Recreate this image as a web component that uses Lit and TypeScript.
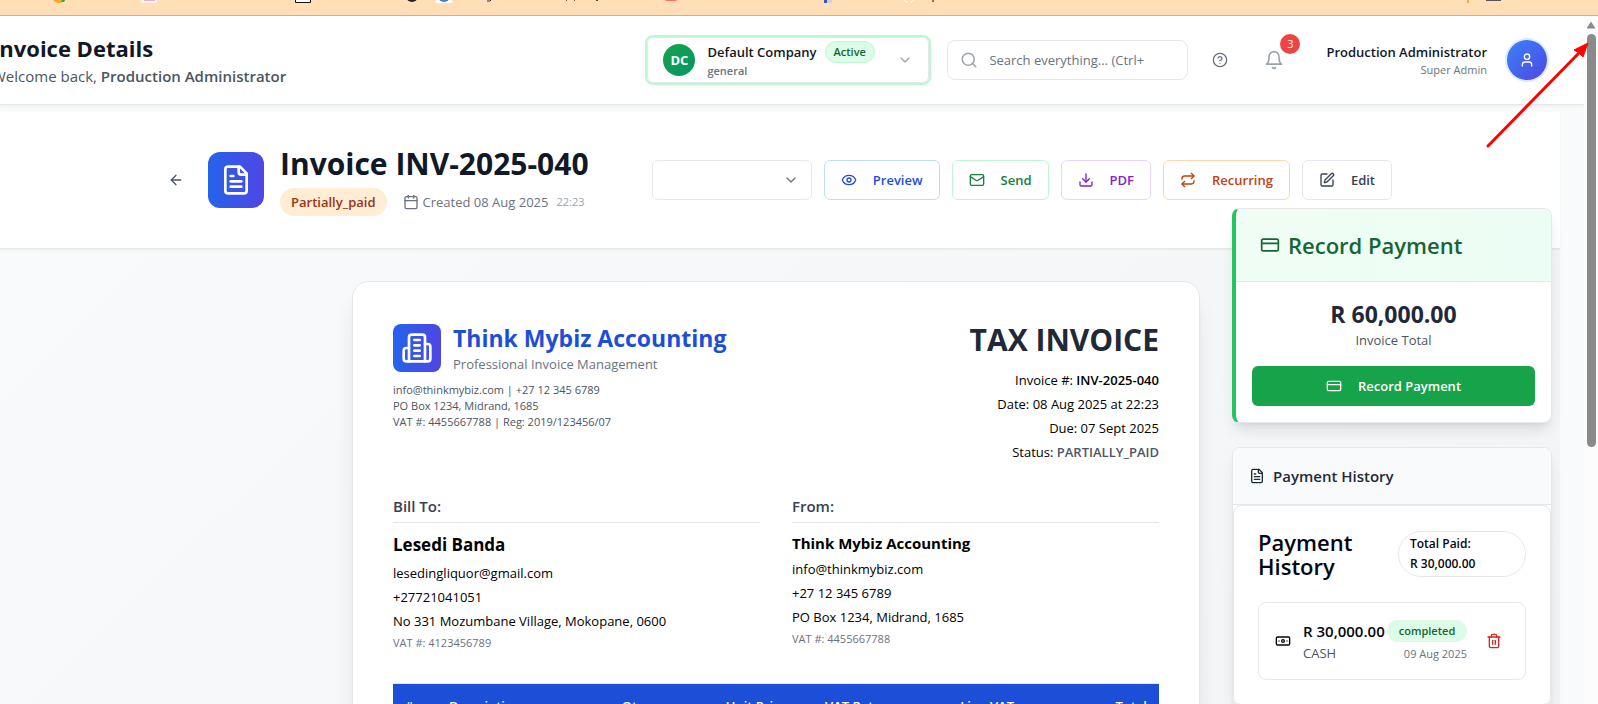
import { LitElement, html, css, svg } from "lit";
import { customElement } from "lit/decorators.js";

const icons: Record<string, unknown> = {
  back: svg`<path d="m12 19-7-7 7-7"/><path d="M19 12H5"/>`,
  file: svg`<path d="M15 2H6a2 2 0 0 0-2 2v16a2 2 0 0 0 2 2h12a2 2 0 0 0 2-2V7Z"/><path d="M14 2v4a2 2 0 0 0 2 2h4"/><path d="M10 9H8"/><path d="M16 13H8"/><path d="M16 17H8"/>`,
  calendar: svg`<path d="M8 2v4"/><path d="M16 2v4"/><rect width="18" height="18" x="3" y="4" rx="2"/><path d="M3 10h18"/>`,
  chevron: svg`<path d="m6 9 6 6 6-6"/>`,
  eye: svg`<path d="M2.062 12.348a1 1 0 0 1 0-.696 10.75 10.75 0 0 1 19.876 0 1 1 0 0 1 0 .696 10.75 10.75 0 0 1-19.876 0"/><circle cx="12" cy="12" r="3"/>`,
  mail: svg`<rect width="20" height="16" x="2" y="4" rx="2"/><path d="m22 7-8.97 5.7a1.94 1.94 0 0 1-2.06 0L2 7"/>`,
  download: svg`<path d="M21 15v4a2 2 0 0 1-2 2H5a2 2 0 0 1-2-2v-4"/><path d="m7 10 5 5 5-5"/><path d="M12 15V3"/>`,
  repeat: svg`<path d="m17 2 4 4-4 4"/><path d="M3 11v-1a4 4 0 0 1 4-4h14"/><path d="m7 22-4-4 4-4"/><path d="M21 13v1a4 4 0 0 1-4 4H3"/>`,
  edit: svg`<path d="M12 3H5a2 2 0 0 0-2 2v14a2 2 0 0 0 2 2h14a2 2 0 0 0 2-2v-7"/><path d="M18.375 2.625a1 1 0 0 1 3 3l-9.013 9.014a2 2 0 0 1-.853.505l-2.873.84a.5.5 0 0 1-.62-.62l.84-2.873a2 2 0 0 1 .506-.852z"/>`,
  card: svg`<rect width="20" height="14" x="2" y="5" rx="2"/><path d="M2 10h20"/>`,
  building: svg`<path d="M6 22V4a2 2 0 0 1 2-2h8a2 2 0 0 1 2 2v18Z"/><path d="M6 12H4a2 2 0 0 0-2 2v6a2 2 0 0 0 2 2h2"/><path d="M18 9h2a2 2 0 0 1 2 2v9a2 2 0 0 1-2 2h-2"/><path d="M10 6h4"/><path d="M10 10h4"/><path d="M10 14h4"/><path d="M10 18h4"/>`,
  search: svg`<circle cx="11" cy="11" r="8"/><path d="m21 21-4.3-4.3"/>`,
  help: svg`<circle cx="12" cy="12" r="10"/><path d="M9.09 9a3 3 0 0 1 5.83 1c0 2-3 3-3 3"/><path d="M12 17h.01"/>`,
  bell: svg`<path d="M6 8a6 6 0 0 1 12 0c0 7 3 9 3 9H3s3-2 3-9"/><path d="M10.3 21a1.94 1.94 0 0 0 3.4 0"/>`,
  user: svg`<path d="M19 21v-2a4 4 0 0 0-4-4H9a4 4 0 0 0-4 4v2"/><circle cx="12" cy="7" r="4"/>`,
  cash: svg`<rect width="20" height="12" x="2" y="6" rx="2"/><circle cx="12" cy="12" r="2"/><path d="M6 12h.01M18 12h.01"/>`,
  trash: svg`<path d="M3 6h18"/><path d="M19 6v14c0 1-1 2-2 2H7c-1 0-2-1-2-2V6"/><path d="M8 6V4c0-1 1-2 2-2h4c1 0 2 1 2 2v2"/><path d="M10 11v6"/><path d="M14 11v6"/>`,
};

const icon = (name: string, size = 16) => html`<svg class="icon" width=${size} height=${size}
  viewBox="0 0 24 24" fill="none" stroke="currentColor" stroke-width="2"
  stroke-linecap="round" stroke-linejoin="round" aria-hidden="true">${icons[name]}</svg>`;

const actions = [
  { label: "Preview", icon: "eye", tone: "blue" },
  { label: "Send", icon: "mail", tone: "green" },
  { label: "PDF", icon: "download", tone: "purple" },
  { label: "Recurring", icon: "repeat", tone: "orange" },
  { label: "Edit", icon: "edit", tone: "gray" },
];

const base = css`
  * { box-sizing: border-box; margin: 0; }
  button, input, select { font: inherit; color: inherit; }
  button { cursor: pointer; }
  .icon { display: block; flex: none; }
`;

@customElement("app-header")
class AppHeader extends LitElement {
  static styles = [base, css`
    :host { display: block; background: #fff; border-bottom: 1px solid #e5e7eb; box-shadow: 0 1px 3px #0000000f; position: relative; }
    .row { display: flex; align-items: center; gap: 12px; height: 88px; padding-right: 37px; }
    .heading { flex: 1; margin-left: -8px; white-space: nowrap; }
    h1 { font-size: 22px; line-height: 32px; font-weight: 700; color: #111827; }
    .welcome { font-size: 15px; line-height: 24px; color: #4b5563; }
    .welcome strong { font-weight: 600; }
    .company { display: flex; align-items: center; gap: 12px; width: 286px; height: 50px; padding: 0 16px; margin-right: 4px; text-align: left;
      background: #fff; border: 2px solid #bbf7d0; border-radius: 8px; box-shadow: inset 0 0 0 1px #e5e7eb; }
    .initials { display: grid; place-items: center; width: 32px; height: 32px; border-radius: 50%; color: #fff;
      font-size: 13px; font-weight: 700; background: linear-gradient(135deg, #16a34a, #059669); }
    .info { flex: 1; }
    .name { display: flex; align-items: center; gap: 8px; font-size: 13px; font-weight: 600; line-height: 20px; color: #111827; white-space: nowrap; }
    .active { font-size: 11px; line-height: 20px; padding: 0 8px; border: 1px solid #bbf7d0; border-radius: 11px; background: #dcfce7; color: #166534; }
    .kind { display: block; font-size: 11px; line-height: 16px; font-weight: 600; color: #6b7280; }
    .company .icon { color: #9ca3af; }
    .search { display: flex; align-items: center; gap: 11px; width: 241px; height: 40px; padding: 0 12px; border: 1px solid #e5e7eb; border-radius: 8px; color: #9ca3af; }
    .search input { flex: 1; min-width: 0; border: 0; padding: 0; outline: 0; background: none; font-size: 13px; color: #374151; }
    .search input::placeholder { color: #6b7280; opacity: 1; }
    .tools { display: flex; gap: 14px; }
    .tool { position: relative; display: grid; place-items: center; width: 40px; height: 40px; padding: 0; border: 0; background: none; color: #6b7280; }
    .bell { color: #9ca3af; }
    .badge { position: absolute; top: -6px; right: -6px; width: 20px; height: 20px; border-radius: 50%; background: #ef4444; color: #fff; font-size: 11px; line-height: 20px; }
    .user { display: flex; align-items: center; gap: 20px; text-align: right; padding-left: 20px; white-space: nowrap; }
    .user-name { font-size: 13px; line-height: 20px; font-weight: 600; color: #111827; }
    .role { font-size: 11px; line-height: 16px; font-weight: 500; color: #6b7280; }
    .avatar { display: grid; place-items: center; width: 40px; height: 40px; padding: 0; border: 0; border-radius: 50%; color: #fff;
      background: linear-gradient(135deg, #3b82f6, #4f46e5); box-shadow: 0 0 0 2px #dbeafe; }
  `];
  render() {
    return html`<header class="row">
      <div class="heading">
        <h1>Invoice Details</h1>
        <p class="welcome">Welcome back, <strong>Production Administrator</strong></p>
      </div>
      <button class="company">
        <span class="initials">DC</span>
        <span class="info">
          <span class="name">Default Company <span class="active">Active</span></span>
          <span class="kind">general</span>
        </span>
        ${icon("chevron")}
      </button>
      <label class="search">${icon("search", 18)}<input type="search" aria-label="Search" placeholder="Search everything... (Ctrl+" /></label>
      <div class="tools">
        <button class="tool" aria-label="Help">${icon("help")}</button>
        <button class="tool bell" aria-label="Notifications">${icon("bell", 20)}<span class="badge">3</span></button>
      </div>
      <div class="user">
        <div><p class="user-name">Production Administrator</p><p class="role">Super Admin</p></div>
        <button class="avatar" aria-label="Account">${icon("user")}</button>
      </div>
    </header>`;
  }
}

@customElement("invoice-toolbar")
class InvoiceToolbar extends LitElement {
  static styles = [base, css`
    :host { display: block; background: #fffffff2; border-bottom: 1px solid #e5e7eb; box-shadow: 0 1px 2px #0000000d; }
    .inner { display: flex; align-items: center; gap: 16px; max-width: 1280px; margin: 0 auto; padding: 32px 24px; }
    .back { display: grid; place-items: center; width: 32px; height: 36px; padding: 0; border: 0; background: none; color: #4b5563; }
    .tile { display: grid; place-items: center; flex: none; width: 56px; height: 56px; border-radius: 12px; color: #fff; background: linear-gradient(90deg, #2563eb, #4f46e5); }
    .title { display: grid; gap: 4px; white-space: nowrap; }
    h2 { font-size: 30px; line-height: 40px; font-weight: 700; color: #111827; }
    .meta { display: flex; align-items: center; gap: 16px; font-size: 13px; line-height: 20px; color: #6b7280; }
    .status { padding: 4px 11px; border-radius: 14px; background: #ffedd5; color: #9a3412; font-weight: 600; }
    .created { display: flex; align-items: center; gap: 4px; }
    .time { font-size: 11px; color: #9ca3af; padding-left: 4px; }
    .actions { display: flex; gap: 12px; margin-left: auto; }
    .picker { position: relative; width: 160px; color: #6b7280; }
    select { width: 100%; height: 40px; appearance: none; border: 1px solid #e5e7eb; border-radius: 6px; background: #fff; padding: 0 36px 0 12px; font-size: 13px; }
    .picker .icon { position: absolute; right: 13px; top: 12px; pointer-events: none; }
    .action { display: flex; align-items: center; gap: 16px; height: 40px; padding: 0 16px; border: 1px solid; border-radius: 6px; background: #fff; font-size: 13px; font-weight: 600; }
    .blue { color: #1d4ed8; border-color: #bfdbfe; }
    .green { color: #15803d; border-color: #bbf7d0; }
    .purple { color: #7e22ce; border-color: #e9d5ff; }
    .orange { color: #c2410c; border-color: #fed7aa; }
    .gray { color: #374151; border-color: #e5e7eb; }
  `];
  render() {
    return html`<section class="inner">
      <button class="back" aria-label="Back">${icon("back")}</button>
      <span class="tile">${icon("file", 32)}</span>
      <div class="title">
        <h2>Invoice INV-2025-040</h2>
        <div class="meta">
          <span class="status">Partially_paid</span>
          <span class="created">${icon("calendar")}Created 08 Aug 2025<span class="time">22:23</span></span>
        </div>
      </div>
      <div class="actions">
        <div class="picker"><select aria-label="Invoice status"><option></option></select>${icon("chevron")}</div>
        ${actions.map((a) => html`<button class="action ${a.tone}">${icon(a.icon)}${a.label}</button>`)}
      </div>
    </section>`;
  }
}

@customElement("invoice-sheet")
class InvoiceSheet extends LitElement {
  static styles = [base, css`
    :host { display: block; padding: 32px 0; }
    .sheet { max-width: 848px; margin: 0 auto; padding: 40px; background: #fff; border: 1px solid #e5e7eb; border-radius: 16px;
      box-shadow: 0 20px 25px -5px #0000001a, 0 8px 10px -6px #0000001a; font-size: 13px; line-height: 20px; color: #000; }
    .top { display: flex; justify-content: space-between; }
    .brand { display: flex; align-items: center; gap: 12px; }
    .logo { display: grid; place-items: center; width: 48px; height: 48px; border-radius: 8px; color: #fff; background: linear-gradient(90deg, #2563eb, #4f46e5); }
    .brand-name { font-size: 23px; line-height: 32px; font-weight: 700; color: #1d4ed8; }
    .tagline { color: #6b7280; }
    .contact { margin-top: 8px; font-size: 11px; line-height: 16px; color: #4b5563; }
    .lines { display: grid; gap: 4px; }
    .summary { text-align: right; align-content: start; }
    .summary h2 { font-size: 30px; line-height: 36px; font-weight: 700; color: #1f2937; margin-bottom: 8px; }
    .summary strong { font-weight: 600; }
    .state { font-weight: 600; color: #4b5563; }
    .parties { display: grid; grid-template-columns: 1fr 1fr; gap: 32px; margin: 32px 0; }
    h3 { font-size: 15px; line-height: 24px; font-weight: 600; color: #374151; padding-bottom: 4px; border-bottom: 1px solid #e5e7eb; margin-bottom: 4px; }
    .party { align-content: start; }
    .client { font-size: 17px; line-height: 28px; font-weight: 700; }
    .vendor { font-size: 15px; line-height: 24px; font-weight: 700; }
    .vat { font-size: 11px; line-height: 16px; color: #6b7280; }
    table { width: 100%; border-collapse: collapse; table-layout: fixed; border-top: 1px solid #e5e7eb; }
    th { padding: 12px; background: #1d4ed8; color: #fff; font-weight: 600; text-align: right; white-space: nowrap; }
    .left { text-align: left; }
    .num { width: 44px; }
    .qty { width: 72px; }
    .price { width: 143px; }
    .rate { width: 94px; }
    .amount { width: 133px; }
  `];
  render() {
    return html`<article class="sheet">
      <div class="top">
        <div>
          <div class="brand">
            <span class="logo">${icon("building", 32)}</span>
            <div><p class="brand-name">Think Mybiz Accounting</p><p class="tagline">Professional Invoice Management</p></div>
          </div>
          <div class="contact">
            <p>info@thinkmybiz.com | +27 12 345 6789</p>
            <p>PO Box 1234, Midrand, 1685</p>
            <p>VAT #: 4455667788 | Reg: 2019/123456/07</p>
          </div>
        </div>
        <div class="summary lines">
          <h2>TAX INVOICE</h2>
          <p>Invoice #: <strong>INV-2025-040</strong></p>
          <p>Date: 08 Aug 2025 at 22:23</p>
          <p>Due: 07 Sept 2025</p>
          <p>Status: <span class="state">PARTIALLY_PAID</span></p>
        </div>
      </div>
      <div class="parties">
        <div class="party lines">
          <h3>Bill To:</h3>
          <p class="client">Lesedi Banda</p>
          <p>lesedingliquor@gmail.com</p>
          <p>+27721041051</p>
          <p>No 331 Mozumbane Village, Mokopane, 0600</p>
          <p class="vat">VAT #: 4123456789</p>
        </div>
        <div class="party lines">
          <h3>From:</h3>
          <p class="vendor">Think Mybiz Accounting</p>
          <p>info@thinkmybiz.com</p>
          <p>+27 12 345 6789</p>
          <p>PO Box 1234, Midrand, 1685</p>
          <p class="vat">VAT #: 4455667788</p>
        </div>
      </div>
      <table>
        <thead><tr>
          <th class="left num">#</th><th class="left">Description</th><th class="qty">Qty</th><th class="price">Unit Price</th>
          <th class="rate">VAT Rate</th><th class="amount">Line VAT</th><th class="amount">Total</th>
        </tr></thead>
      </table>
    </article>`;
  }
}

@customElement("payment-sidebar")
class PaymentSidebar extends LitElement {
  static styles = [base, css`
    :host { display: grid; gap: 24px; font-size: 13px; line-height: 20px; }
    .card { background: #fff; border: 1px solid #e5e7eb; border-radius: 8px; overflow: hidden; box-shadow: 0 10px 15px -3px #0000001a, 0 4px 6px -4px #0000001a; }
    .record { border-left: 4px solid #22c55e; }
    .record-head { display: flex; align-items: center; gap: 8px; padding: 24px; color: #166534; background: linear-gradient(90deg, #f0fdf4, #ecfdf5); border-bottom: 1px solid #e5e7eb; }
    h3 { font-size: 22px; line-height: 24px; font-weight: 600; }
    .record-body { padding: 16px; text-align: center; }
    .total { font-size: 23px; line-height: 32px; font-weight: 700; color: #1f2937; }
    .caption { color: #4b5563; }
    .pay { display: flex; align-items: center; justify-content: center; gap: 16px; width: 100%; height: 40px; margin-top: 16px; border: 0; border-radius: 6px; background: #16a34a; color: #fff; font-weight: 600; }
    .history-head { display: flex; align-items: center; gap: 8px; padding: 16px; background: #f9fafb; border-bottom: 1px solid #e5e7eb; color: #1f2937; }
    h4 { font-size: 15px; line-height: 24px; font-weight: 600; }
    .panel { display: grid; grid-template-columns: minmax(0, 1fr); gap: 24px; padding: 24px; border: 1px solid #e5e7eb; border-radius: 8px; color: #030712; box-shadow: 0 1px 2px #0000000d; }
    .panel-head { display: flex; align-items: center; justify-content: space-between; }
    .panel-head h3 { width: 112px; }
    .paid { width: 128px; padding: 2px 11px; border: 1px solid #e5e7eb; border-radius: 23px; font-size: 12px; font-weight: 600; }
    .entry { display: flex; align-items: center; gap: 12px; padding: 16px; border: 1px solid #e5e7eb; border-radius: 8px; }
    .detail { flex: 1; min-width: 0; white-space: nowrap; }
    .sum { font-size: 15px; line-height: 24px; font-weight: 600; }
    .method { color: #4b5563; }
    .when { display: grid; flex: none; gap: 4px; width: 80px; font-size: 11px; line-height: 16px; text-align: right; color: #6b7280; }
    .done { line-height: 22px; border-radius: 11px; background: #dcfce7; color: #166534; font-weight: 600; text-align: center; }
    .remove { display: grid; flex: none; place-items: center; width: 30px; height: 30px; padding: 0; border: 0; background: none; color: #dc2626; }
  `];
  render() {
    return html`
      <section class="card record">
        <div class="record-head">${icon("card", 20)}<h3>Record Payment</h3></div>
        <div class="record-body">
          <p class="total">R 60,000.00</p>
          <p class="caption">Invoice Total</p>
          <button class="pay">${icon("card")}Record Payment</button>
        </div>
      </section>
      <section class="card">
        <div class="history-head">${icon("file")}<h4>Payment History</h4></div>
        <div class="panel">
          <div class="panel-head"><h3>Payment History</h3><span class="paid">Total Paid: R&nbsp;30,000.00</span></div>
          <div class="entry">
            ${icon("cash")}
            <div class="detail"><p class="sum">R 30,000.00</p><p class="method">CASH</p></div>
            <div class="when"><span class="done">completed</span><span>09 Aug 2025</span></div>
            <button class="remove" aria-label="Delete payment">${icon("trash")}</button>
          </div>
        </div>
      </section>`;
  }
}

@customElement("app-root")
class AppRoot extends LitElement {
  static styles = [base, css`
    :host { display: grid; grid-template-rows: auto 1fr; height: 100vh; overflow: hidden; position: relative; font-family: "Open Sans", "Noto Sans", sans-serif; background: #f8fafc; }
    .bookmarks { height: 16px; background: #ffdeb8; border-bottom: 1px solid #c9b08e; overflow: hidden; }
    .bookmarks svg { display: block; }
    .viewport { display: grid; grid-template-columns: 1fr 14px; min-height: 0; }
    .page { min-width: 0; min-height: 0; overflow: hidden; }
    .content { position: relative; margin: 7px 24px 0 -8px; background: linear-gradient(135deg, #f9fafb, #f3f4f6); }
    .side { position: absolute; top: 96px; right: 8px; width: 320px; }
    .track { display: grid; grid-template-rows: 18px auto; justify-items: center; align-content: start; background: #fcfcfc; }
    .up { align-self: center; width: 9px; height: 7px; background: #8a8a8a; clip-path: polygon(50% 0, 100% 100%, 0 100%); }
    .thumb { width: 9px; height: 413px; border-radius: 5px; background: #8a8a8a; }
    .pointer { position: absolute; top: 40px; right: 4px; }
  `];
  render() {
    return html`
      <div class="bookmarks"><svg width="1598" height="4" aria-hidden="true">
        <circle cx="59" cy="-4" r="7" fill="#f9a825"/><path d="M62 0h3l-1 2h-3z" fill="#34a853"/>
        <path d="M141 0h16v3h-16z" fill="#f4f1f6"/><path d="M144 0h11v1h-11z" fill="#dcb9b4"/>
        <path d="M295.5-4h15v6.500h-15z" fill="#fff" stroke="#111"/>
        <circle cx="412" cy="-4" r="6" fill="#222"/>
        <path d="M436 0h16v3h-16z" fill="#fff"/><circle cx="444" cy="-4" r="6" fill="#3b82c4"/>
        <path d="M487 1h3l1-1" stroke="#333" fill="none"/>
        <path d="M566 0h1v1h-1zM574 0h1v1h-1zM596 0h2v1h-2z" fill="#704020"/>
        <path d="M664 0h14l-3 1h-8z" fill="#ff6b6b"/>
        <path d="M824 0h3v3h-3z" fill="#4453b8"/><path d="M827 0h5v3h-5z" fill="#cfd0d8"/>
        <path d="M903 0l4 3v-2zM915 0l-4 3v-2z" fill="#fff"/><path d="M932 0h2v2h-2z" fill="#b5652b"/>
        <path d="M1467 0h2v3h-2z" fill="#f5a742"/><path d="M1486 0h15v1h-15z" fill="#555"/>
      </svg></div>
      <div class="viewport">
        <div class="page">
          <app-header></app-header>
          <main class="content">
            <invoice-toolbar></invoice-toolbar>
            <invoice-sheet></invoice-sheet>
            <payment-sidebar class="side"></payment-sidebar>
          </main>
        </div>
        <div class="track"><span class="up"></span><span class="thumb"></span></div>
      </div>
      <svg class="pointer" width="112" height="112" aria-hidden="true">
        <path d="M6 106 96 14" stroke="#f00" stroke-width="3" stroke-linecap="round"/>
        <path d="M106 3 101 17 97 13 92 10z" fill="#f00" stroke="#f00" stroke-linejoin="round"/>
      </svg>`;
  }
}
